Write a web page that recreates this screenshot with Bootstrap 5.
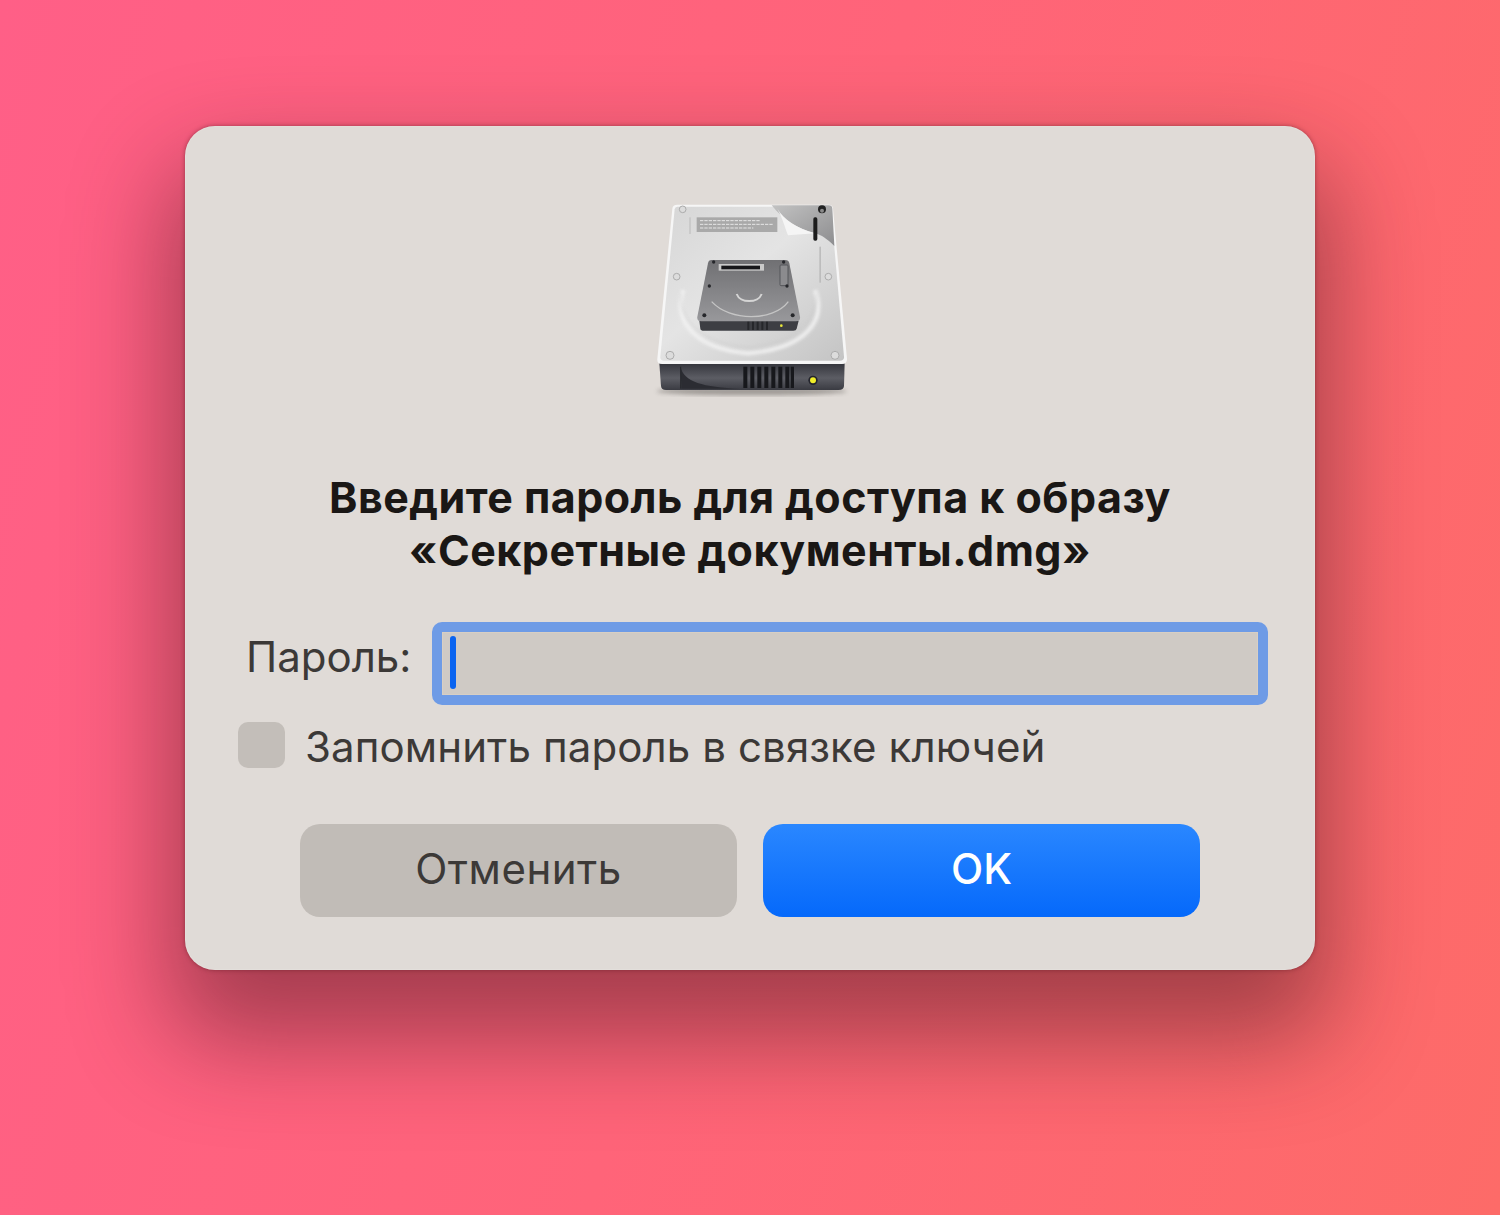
<!DOCTYPE html>
<html lang="ru">
<head>
  <meta charset="UTF-8" />
  <meta name="viewport" content="width=device-width, initial-scale=1.0" />
  <title>Пароль</title>
  <link href="https://cdn.jsdelivr.net/npm/bootstrap@5.3.0/dist/css/bootstrap.min.css" rel="stylesheet" />
  <style>
    html, body { height: 100%; }
    body {
      background: linear-gradient(105deg, #ff5f87 0%, #ff6479 50%, #fd6b68 100%);
      font-family: Inter, "Liberation Sans", sans-serif;
      padding-top: 126px;
      overflow: hidden;
    }
    .dialog-box {
      width: 1130px;
      height: 844px;
      background: #e0dbd7;
      border-radius: 30px;
      box-shadow: 0 0 0 1px rgba(255, 255, 255, .12) inset, 0 0 4px rgba(90, 20, 30, .5), 0 55px 100px 15px rgba(70, 20, 30, .48);
      color: #1a1715;
    }
    .disk-icon { display: block; width: 220px; height: 220px; margin-top: 64px; filter: blur(.6px); }
    .dialog-title {
      margin: 61px 0 0;
      font-size: 43px;
      letter-spacing: .47px;
      line-height: 53px;
      font-weight: 700;
      text-align: center;
      color: #1a1715;
    }
    .pass-row { margin: 45px 47px 0 61px; }
    .pass-label { font-size: 42px; line-height: 66px; color: #3c3937; width: 186px; flex: none; margin-top: 2px; }
    .pass-field {
      flex: 1;
      height: 83px;
      background: #cfcac5;
      border: 10px solid #6e9be6;
      border-radius: 10px;
      padding: 4px 8px;
      box-shadow: inset 0 0 0 1px #d8cfc4;
    }
    .pass-caret { display: block; width: 6px; height: 53px; background: #0a64f0; border-radius: 3px; }
    .keep-row { margin: 17px 0 0 53px; gap: 20px; }
    .keep-box { width: 47px; height: 46px; border-radius: 10px; background: #c3beb9; flex: none; }
    .keep-label { font-size: 42px; line-height: 46px; letter-spacing: .1px; color: #3c3937; padding-top: 2px; margin-bottom: -2px; }
    .btn-row { margin: 56px 0 0 115px; gap: 26px; }
    .dlg-btn {
      width: 437px;
      height: 93px;
      border: 0;
      border-radius: 20px;
      font-size: 42px;
      line-height: 1;
      padding: 0 0 3px;
    }
    .dlg-cancel { background: #c1bcb7; color: #3c3937; letter-spacing: .5px; }
    .dlg-ok { background: linear-gradient(180deg, #2a87ff 0%, #0569fb 100%); color: #fff; font-weight: 500; }
  </style>
</head>
<body>
  <div class="dialog-box mx-auto d-flex flex-column">
    <!-- drive icon, viewBox is 3x the screen size -->
    <div class="d-flex justify-content-center">
      <svg class="disk-icon" viewBox="0 0 660 660" aria-hidden="true">
        <defs>
          <linearGradient id="plate" x1="0" y1="0" x2="1" y2="1">
            <stop offset="0" stop-color="#d6d6d6" />
            <stop offset=".45" stop-color="#e4e4e4" />
            <stop offset="1" stop-color="#c4c4c4" />
          </linearGradient>
          <linearGradient id="front" x1="0" y1="0" x2="0" y2="1">
            <stop offset="0" stop-color="#34353c" />
            <stop offset=".55" stop-color="#5c5d64" />
            <stop offset="1" stop-color="#3a3b42" />
          </linearGradient>
          <linearGradient id="inner" x1="0" y1="0" x2="0" y2="1">
            <stop offset="0" stop-color="#707073" />
            <stop offset="1" stop-color="#98989b" />
          </linearGradient>
          <linearGradient id="peel" x1="0" y1="0" x2="1" y2="1">
            <stop offset="0" stop-color="#c2c2c2" />
            <stop offset="1" stop-color="#8d8d8f" />
          </linearGradient>
          <filter id="soft"><feGaussianBlur stdDeviation="4" /></filter>
          <filter id="softer"><feGaussianBlur stdDeviation="6" /></filter>
        </defs>
        <ellipse cx="335" cy="604" rx="285" ry="12" fill="#6a6662" opacity=".55" filter="url(#softer)" />
        <!-- front face -->
        <path d="M58 520H614L612 588Q611 600 596 600H78Q64 600 63 588Z" fill="url(#front)" />
        <path d="M122 530C130 575 190 592 300 596H124Z" fill="#2b2c32" />
        <path d="M122 530V596" stroke="#25262b" stroke-width="3" />
        <g fill="#17181c">
          <rect x="310" y="530" width="12" height="64" /><rect x="331" y="530" width="12" height="64" />
          <rect x="352" y="530" width="12" height="64" /><rect x="373" y="530" width="12" height="64" />
          <rect x="394" y="530" width="12" height="64" /><rect x="415" y="530" width="12" height="64" />
          <rect x="436" y="530" width="12" height="64" /><rect x="452" y="530" width="10" height="64" />
        </g>
        <circle cx="519" cy="571" r="14" fill="#23242c" />
        <circle cx="519" cy="571" r="9" fill="#f0ee2a" />
        <!-- top plate -->
        <path d="M112 44H566Q578 44 579 56L621 506Q622 522 606 522H66Q50 522 52 506L97 56Q98 44 112 44Z" fill="#f6f6f6" />
        <path d="M112 50H564Q572 50 573 58L612 500Q613 512 600 512H72Q60 512 61 500L104 58Q105 50 112 50Z" fill="url(#plate)" />
        <!-- platter ring -->
        <path d="M130 300C100 380 150 475 325 490C500 475 560 390 525 300" fill="none" stroke="#f2f2f2" stroke-width="13" opacity=".85" filter="url(#soft)" />
        <path d="M122 310C115 390 190 462 325 472C460 462 535 390 530 310" fill="none" stroke="#c6c6c6" stroke-width="3" opacity=".7" filter="url(#soft)" />
        <!-- corner screws -->
        <g fill="#dcdcdc" stroke="#acacac" stroke-width="3">
          <circle cx="128" cy="58" r="10" /><circle cx="110" cy="260" r="10" />
          <circle cx="565" cy="260" r="10" /><circle cx="90" cy="496" r="12" /><circle cx="585" cy="496" r="12" />
        </g>
        <!-- label -->
        <rect x="170" y="82" width="242" height="44" fill="#a9a9a9" />
        <g stroke="#e6e6e6" stroke-width="3" stroke-dasharray="10 3">
          <line x1="180" y1="92" x2="360" y2="92" /><line x1="180" y1="103" x2="400" y2="103" /><line x1="180" y1="114" x2="340" y2="114" />
        </g>
        <rect x="148" y="82" width="4" height="50" fill="#c2c2c2" />
        <!-- peeled sticker -->
        <path d="M395 46H566Q576 46 577 56L583 168C560 146 545 135 525 130C470 115 430 90 395 46Z" fill="url(#peel)" />
        <path d="M412 56C432 88 470 115 526 130L444 136C434 110 428 85 412 56Z" fill="#f5f5f5" />
        <circle cx="546" cy="58" r="12" fill="#222" /><circle cx="546" cy="62" r="6" fill="#8a8a8a" />
        <rect x="520" y="82" width="12" height="70" rx="5" fill="#1c1c1c" />
        <rect x="538" y="170" width="5" height="108" fill="#bdbdbd" />
        <!-- inner drive -->
        <path d="M178 392H476L470 416Q469 422 460 422H192Q182 422 181 416Z" fill="#3d3e43" />
        <g fill="#26272b">
          <rect x="322" y="394" width="6" height="26" /><rect x="336" y="394" width="6" height="26" />
          <rect x="350" y="394" width="6" height="26" /><rect x="364" y="394" width="6" height="26" /><rect x="378" y="394" width="6" height="26" />
        </g>
        <circle cx="424" cy="407" r="4" fill="#e9e83a" />
        <path d="M214 210H436Q446 210 448 220L480 380Q482 394 468 394H184Q170 394 172 380L204 220Q206 210 214 210Z" fill="url(#inner)" />
        <path d="M215 335C270 395 400 395 445 335" fill="none" stroke="#c5c5c5" stroke-width="4" />
        <path d="M290 312C300 340 355 340 365 312" fill="none" stroke="#d5d5d5" stroke-width="6" />
        <rect x="236" y="222" width="136" height="20" fill="#c9c9c9" />
        <rect x="244" y="227" width="116" height="11" fill="#17171a" />
        <rect x="420" y="225" width="24" height="62" rx="3" fill="#8b8b8e" stroke="#55565a" stroke-width="3" />
        <g fill="#26272b">
          <circle cx="221" cy="216" r="5" /><circle cx="431" cy="216" r="5" /><circle cx="208" cy="288" r="5" />
          <circle cx="441" cy="288" r="5" /><circle cx="193" cy="376" r="6" /><circle cx="458" cy="376" r="6" />
        </g>
      </svg>
    </div>

    <h1 class="dialog-title">Введите пароль для доступа к образу<br />«Секретные документы.dmg»</h1>

    <div class="pass-row d-flex align-items-start">
      <label class="pass-label">Пароль:</label>
      <div class="pass-field"><span class="pass-caret"></span></div>
    </div>

    <div class="keep-row d-flex align-items-center">
      <span class="keep-box"></span>
      <span class="keep-label">Запомнить пароль в связке ключей</span>
    </div>

    <div class="btn-row d-flex">
      <button type="button" class="btn dlg-btn dlg-cancel">Отменить</button>
      <button type="button" class="btn dlg-btn dlg-ok">OK</button>
    </div>
  </div>
  <script src="https://cdn.jsdelivr.net/npm/bootstrap@5.3.0/dist/js/bootstrap.bundle.min.js"></script>
</body>
</html>
